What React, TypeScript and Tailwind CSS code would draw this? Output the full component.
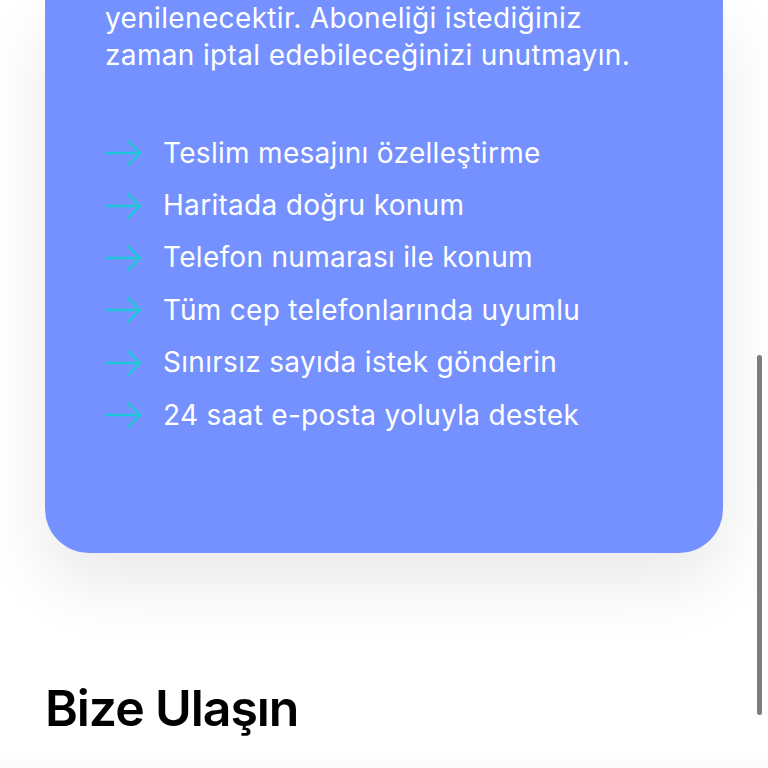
import React from 'react';

const features = [
    'Teslim mesajını özelleştirme',
    'Haritada doğru konum',
    'Telefon numarası ile konum',
    'Tüm cep telefonlarında uyumlu',
    'Sınırsız sayıda istek gönderin',
    '24 saat e-posta yoluyla destek',
];

function Arrow() {
    return (
        <svg width="38" height="28" viewBox="0 0 38 28" fill="none" className="shrink-0">
            <path d="M1 14H35M23 2L35 14L23 26" stroke="#1fc8d8" strokeWidth="2.4" strokeLinecap="round" strokeLinejoin="round" />
        </svg>
    );
}

export default function App() {
    return (
        <div
            className="relative h-[768px] w-[768px] overflow-hidden bg-white"
            style={{ fontFamily: 'Inter, "Noto Sans", sans-serif' }}
        >
            {/* Pricing card */}
            <div className="mx-[45px] rounded-b-[44px] bg-[#7590ff] px-[60px] pb-[112px] text-white shadow-[0_30px_70px_rgba(0,0,0,0.09)]">
                <p className="text-[28px] leading-[37px] tracking-[0.35px]">
                    yenilenecektir. Aboneliği istediğiniz
                    <br />
                    zaman iptal edebileceğinizi unutmayın.
                </p>
                <ul className="mt-[53px] flex flex-col">
                    {features.map((f) => (
                        <li key={f} className="flex h-[52.4px] items-center gap-[20px]">
                            <Arrow />
                            <span className="text-[28px] leading-[37px] tracking-[0.3px]">{f}</span>
                        </li>
                    ))}
                </ul>
            </div>

            {/* Contact heading */}
            <h2 className="mt-[127px] px-[45px] text-[50px] font-semibold leading-[56px] tracking-[-1.1px] text-black">
                Bize Ulaşın
            </h2>
            <div className="mt-[10px] h-[60px] bg-gradient-to-b from-white to-[#f4f4f4]" />

            {/* scroll indicator */}
            <div className="absolute left-[757px] top-[355px] h-[360px] w-[5px] rounded-full bg-[#7d7d7d]" />
        </div>
    );
}
